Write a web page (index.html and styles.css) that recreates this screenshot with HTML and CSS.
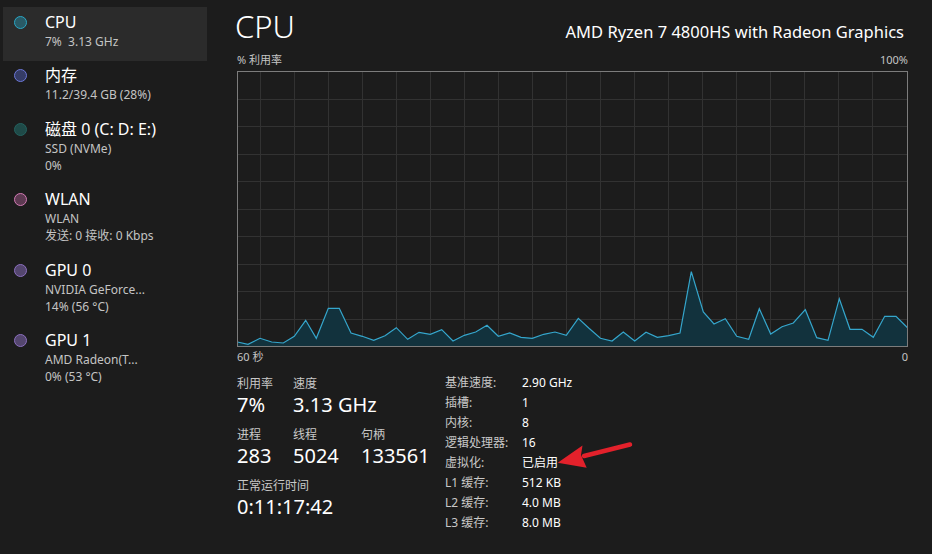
FILE: index.html
```html
<!DOCTYPE html>
<html lang="zh-CN">
<head>
    <meta charset="UTF-8">
    <title>任务管理器 - 性能</title>
    <link rel="stylesheet" href="styles.css">
</head>
<body>
    <div class="app">
        <nav class="sidebar">
            <div class="item active">
                <span class="dot dot-cpu"></span>
                <div class="item-text">
                    <div class="item-title">CPU</div>
                    <div class="item-sub">7%&nbsp; 3.13 GHz</div>
                </div>
            </div>
            <div class="item">
                <span class="dot dot-mem"></span>
                <div class="item-text">
                    <div class="item-title">内存</div>
                    <div class="item-sub">11.2/39.4 GB (28%)</div>
                </div>
            </div>
            <div class="item">
                <span class="dot dot-disk"></span>
                <div class="item-text">
                    <div class="item-title">磁盘 0 (C: D: E:)</div>
                    <div class="item-sub">SSD (NVMe)</div>
                    <div class="item-sub">0%</div>
                </div>
            </div>
            <div class="item">
                <span class="dot dot-wlan"></span>
                <div class="item-text">
                    <div class="item-title">WLAN</div>
                    <div class="item-sub">WLAN</div>
                    <div class="item-sub">发送: 0 接收: 0 Kbps</div>
                </div>
            </div>
            <div class="item">
                <span class="dot dot-gpu"></span>
                <div class="item-text">
                    <div class="item-title">GPU 0</div>
                    <div class="item-sub">NVIDIA GeForce...</div>
                    <div class="item-sub">14% (56 °C)</div>
                </div>
            </div>
            <div class="item">
                <span class="dot dot-gpu"></span>
                <div class="item-text">
                    <div class="item-title">GPU 1</div>
                    <div class="item-sub">AMD Radeon(T...</div>
                    <div class="item-sub">0% (53 °C)</div>
                </div>
            </div>
        </nav>

        <main class="panel">
            <header class="panel-head">
                <h1>CPU</h1>
                <div class="model">AMD Ryzen 7 4800HS with Radeon Graphics</div>
            </header>

            <div class="axis axis-top">
                <span>% 利用率</span>
                <span>100%</span>
            </div>

            <div class="chart">
                <svg width="671" height="276" viewBox="0 0 671 276">
                    <g class="grid">
                        <path d="M23.5 1V275M57.5 1V275M91.5 1V275M125.5 1V275M159.5 1V275M193.5 1V275M227.5 1V275M261.5 1V275M295.5 1V275M329.5 1V275M363.5 1V275M397.5 1V275M431.5 1V275M465.5 1V275M499.5 1V275M533.5 1V275M567.5 1V275M601.5 1V275M635.5 1V275"/>
                        <path d="M1 28.5H670M1 55.5H670M1 83.5H670M1 110.5H670M1 138.5H670M1 165.5H670M1 193.5H670M1 220.5H670M1 248.5H670"/>
                    </g>
                    <polygon class="area" points="0.5,275 0.5,271 11,273.3 23,267.3 34.7,271 46.3,272 57.3,265.3 68.7,249.3 79.3,267.3 91.3,237.3 102.3,237.3 114,262 125.3,265.3 136.7,269.3 148,264.7 159.3,256.7 170.7,268.3 182,261.3 193.3,263.3 204.7,258.7 216,270 227.3,264.3 238.7,261 250,254.3 261.3,265.3 272.7,262 284,266.3 295.3,267.3 306.7,263.3 318,261 329.3,264.3 341.3,247.3 352,257.3 363.4,267.3 375,270 386.3,261 397.7,270 409,261.3 420.3,266.3 431.7,264.7 443,262 454.3,200.7 466.3,241 477,253 488.3,247.7 499.7,265.3 511.7,268.3 522.3,237.7 533.7,263 545,255.7 556.3,252 568.3,238.7 579.7,266.7 591,269.3 602.3,227.7 613,258.3 625,258.3 636.3,266.3 647.7,245.3 659,245.3 670.5,256.7 670.5,275"/>
                    <polyline class="line" points="0.5,271 11,273.3 23,267.3 34.7,271 46.3,272 57.3,265.3 68.7,249.3 79.3,267.3 91.3,237.3 102.3,237.3 114,262 125.3,265.3 136.7,269.3 148,264.7 159.3,256.7 170.7,268.3 182,261.3 193.3,263.3 204.7,258.7 216,270 227.3,264.3 238.7,261 250,254.3 261.3,265.3 272.7,262 284,266.3 295.3,267.3 306.7,263.3 318,261 329.3,264.3 341.3,247.3 352,257.3 363.4,267.3 375,270 386.3,261 397.7,270 409,261.3 420.3,266.3 431.7,264.7 443,262 454.3,200.7 466.3,241 477,253 488.3,247.7 499.7,265.3 511.7,268.3 522.3,237.7 533.7,263 545,255.7 556.3,252 568.3,238.7 579.7,266.7 591,269.3 602.3,227.7 613,258.3 625,258.3 636.3,266.3 647.7,245.3 659,245.3 670.5,256.7"/>
                    <rect class="frame" x="0.5" y="0.5" width="670" height="275"/>
                </svg>
            </div>

            <div class="axis axis-bottom">
                <span>60 秒</span>
                <span>0</span>
            </div>

            <section class="stats">
                <div class="stats-main">
                    <div class="stat-row">
                        <div class="stat w1">
                            <div class="stat-label">利用率</div>
                            <div class="stat-value">7%</div>
                        </div>
                        <div class="stat">
                            <div class="stat-label">速度</div>
                            <div class="stat-value">3.13 GHz</div>
                        </div>
                    </div>
                    <div class="stat-row">
                        <div class="stat w1">
                            <div class="stat-label">进程</div>
                            <div class="stat-value">283</div>
                        </div>
                        <div class="stat w2">
                            <div class="stat-label">线程</div>
                            <div class="stat-value">5024</div>
                        </div>
                        <div class="stat">
                            <div class="stat-label">句柄</div>
                            <div class="stat-value">133561</div>
                        </div>
                    </div>
                    <div class="stat-row">
                        <div class="stat">
                            <div class="stat-label">正常运行时间</div>
                            <div class="stat-value">0:11:17:42</div>
                        </div>
                    </div>
                </div>

                <table class="specs">
                    <tr><td class="spec-key">基准速度:</td><td>2.90 GHz</td></tr>
                    <tr><td class="spec-key">插槽:</td><td>1</td></tr>
                    <tr><td class="spec-key">内核:</td><td>8</td></tr>
                    <tr><td class="spec-key">逻辑处理器:</td><td>16</td></tr>
                    <tr><td class="spec-key">虚拟化:</td><td>已启用</td></tr>
                    <tr><td class="spec-key">L1 缓存:</td><td>512 KB</td></tr>
                    <tr><td class="spec-key">L2 缓存:</td><td>4.0 MB</td></tr>
                    <tr><td class="spec-key">L3 缓存:</td><td>8.0 MB</td></tr>
                </table>

                <!-- red annotation arrow pointing at 已启用 -->
                <svg class="arrow" width="80" height="32" viewBox="0 0 80 32">
                    <path d="M73 3.5L27 15" stroke="#e3212b" stroke-width="4.5" stroke-linecap="round" fill="none"/>
                    <polygon points="0.7,21.7 25.5,4.5 24,14 29.7,26.7" fill="#e3212b"/>
                </svg>
            </section>
        </main>
    </div>
</body>
</html>
```

FILE: styles.css
```css
body {
    margin: 0;
    background-color: #1c1c1c;
    color: #fff;
    font-family: "Segoe UI", "Noto Sans", "Noto Sans CJK SC", sans-serif;
}

.app {
    display: flex;
    width: 932px;
    height: 554px;
    overflow: hidden;
}

/* left list */
.sidebar {
    width: 220px;
    flex-shrink: 0;
    padding-top: 7px;
    background-color: #1c1c1c;
}

.item {
    display: flex;
    margin-left: 3px;
    width: 204px;
    padding: 4.5px 0 11px 11px;
    box-sizing: border-box;
}

.item.active {
    background-color: #2b2b2b;
}

.dot {
    width: 11px;
    height: 11px;
    margin-top: 4px;
    border-radius: 50%;
    border: 1.5px solid;
    flex-shrink: 0;
}

.dot-cpu {
    background-color: #295a66;
    border-color: #2aa7c6;
}

.dot-mem {
    background-color: #353c66;
    border-color: #6c78d8;
}

.dot-disk {
    background-color: #1f4a48;
    border-color: #24625f;
}

.dot-wlan {
    background-color: #5d3a52;
    border-color: #d27ab4;
}

.dot-gpu {
    background-color: #54466e;
    border-color: #8c6fc0;
}

.item-text {
    margin-left: 18px;
}

.item-title {
    font-size: 16px;
    line-height: 21px;
    color: #fff;
}

.item-sub {
    font-size: 12px;
    line-height: 17px;
    color: #c4c4c4;
}

/* right panel */
.panel {
    position: relative;
    flex: 1;
    padding: 0 25px 0 17px;
}

.panel-head {
    display: flex;
    justify-content: space-between;
    align-items: baseline;
    margin-top: 11px;
}

.panel-head h1 {
    margin: 0;
    font-size: 31px;
    font-weight: 300;
    line-height: 31px;
    margin-left: -2px;
}

.model {
    font-size: 16.5px;
    margin-right: 4px;
}

.axis {
    display: flex;
    justify-content: space-between;
    font-size: 11px;
    line-height: 16px;
    color: #c4c4c4;
}

.axis-top {
    margin-top: 9px;
}

.chart {
    margin-top: 3px;
    height: 276px;
}

.chart svg {
    display: block;
}

.grid path {
    stroke: #323232;
    stroke-width: 1;
    fill: none;
}

.area {
    fill: #12323d;
}

.line {
    fill: none;
    stroke: #35a6cc;
    stroke-width: 1.2;
    stroke-linejoin: miter;
}

.frame {
    fill: none;
    stroke: #7c7c7c;
    stroke-width: 1;
}

.axis-bottom {
    margin-top: 2px;
}

/* numbers under the chart */
.stats {
    position: relative;
    display: flex;
    margin-top: 8px;
}

.stats-main {
    width: 208px;
    padding-top: 3px;
}

.stat-row {
    display: flex;
    margin-bottom: 10px;
}

.stat.w1 {
    width: 56px;
}

.stat.w2 {
    width: 68px;
}

.stat-label {
    font-size: 12px;
    line-height: 16px;
    color: #c8c8c8;
}

.stat-value {
    margin-top: 1px;
    font-size: 20px;
    line-height: 24px;
    color: #fff;
}

.specs {
    border-collapse: collapse;
    font-size: 12px;
}

.specs td {
    padding: 0;
    height: 20px;
    line-height: 20px;
    color: #fff;
}

.specs .spec-key {
    width: 77px;
    color: #c8c8c8;
}

.arrow {
    position: absolute;
    left: 320px;
    top: 68px;
}
```
